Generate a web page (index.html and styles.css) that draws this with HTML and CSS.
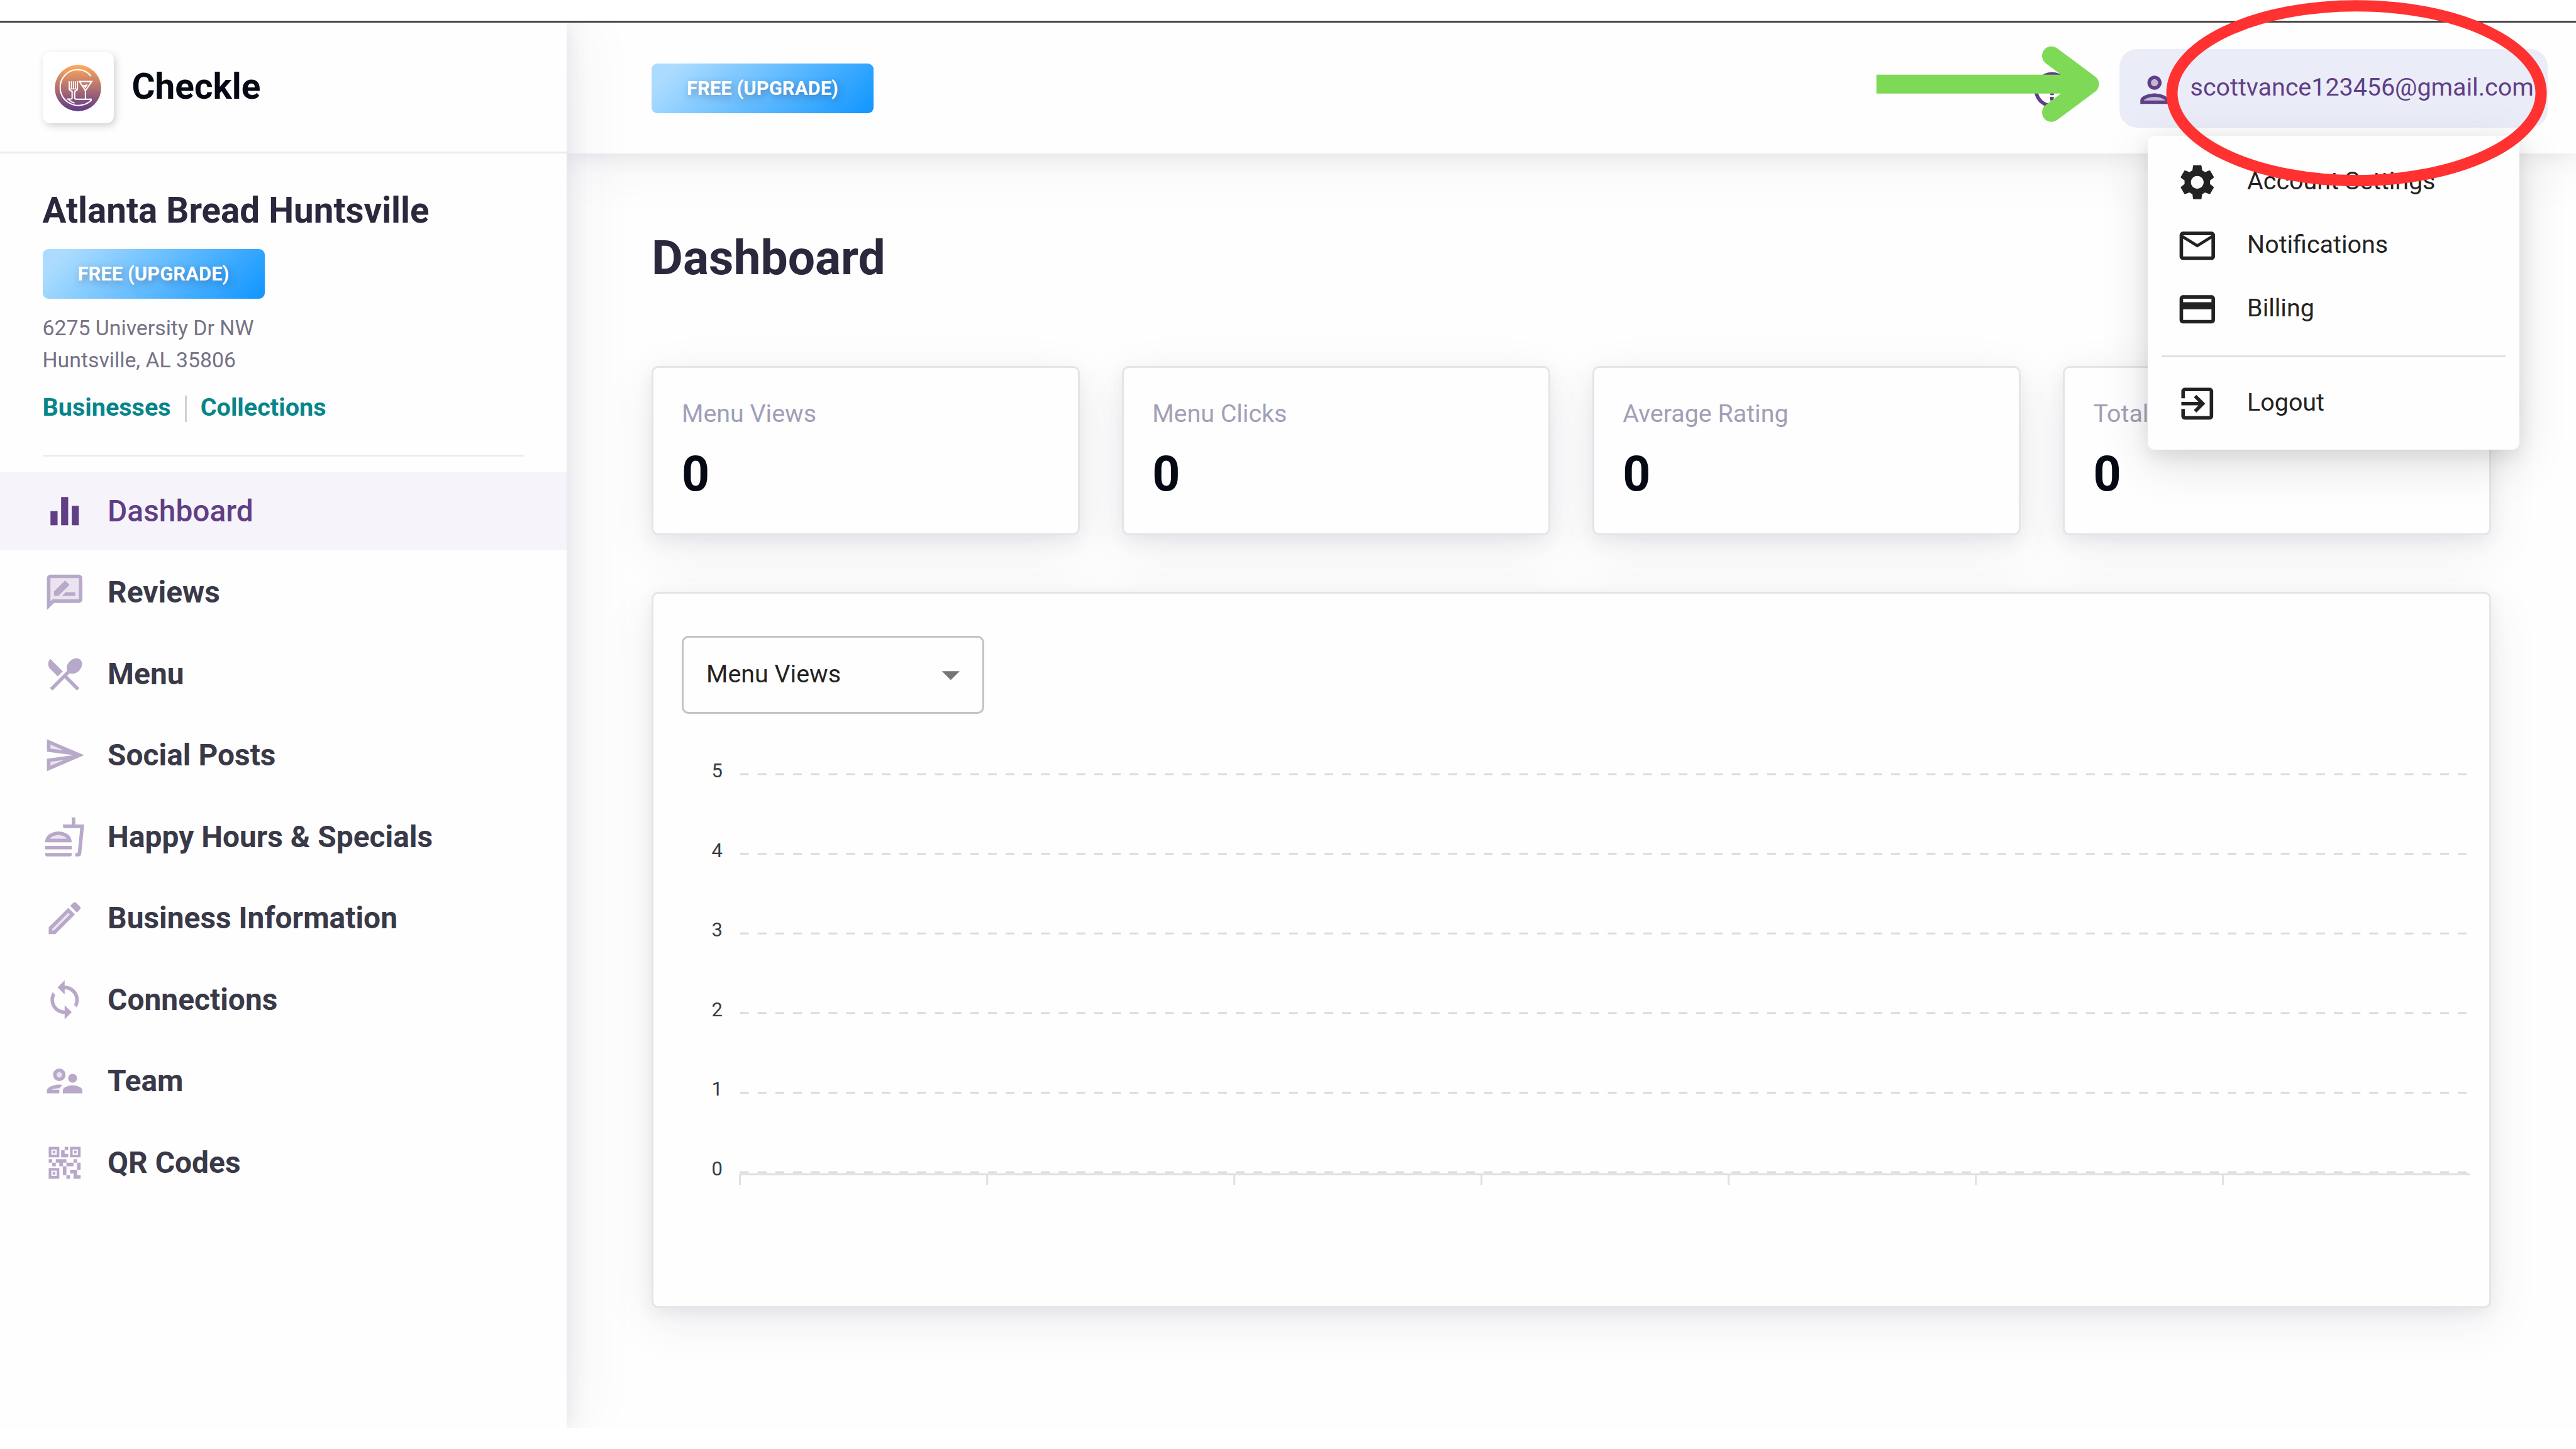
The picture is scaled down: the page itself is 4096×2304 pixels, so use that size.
FILE: index.html
```
<!DOCTYPE html>
<html lang="en">

<head>
    <meta charset="UTF-8">
    <meta name="viewport" content="width=device-width, initial-scale=1.0">
    <title>Checkle | Dashboard</title>
    <link rel="stylesheet" href="styles.css">
</head>

<body>
    <div class="app">
        <aside class="sidebar">
            <div class="brand">
                <div class="brand-logo">
                    <svg viewBox="112 153 324 325">
                        <defs>
                            <linearGradient id="logo-fill" x1="0" y1="0" x2="0" y2="1">
                                <stop offset="0.04" stop-color="#fba75c" />
                                <stop offset="0.5" stop-color="#b1706f" />
                                <stop offset="0.95" stop-color="#663f87" />
                            </linearGradient>
                        </defs>
                        <circle cx="274" cy="315.500" r="162" fill="url(#logo-fill)" />
                        <g fill="none" stroke="#fff" stroke-width="9">
                            <path d="M365 232A122 124 0 1 0 200 412Q236 437 278 437Q330 436 366 401V394H262Q251 394 251 384V340L270 326V268" />
                            <path d="M196 392H224Q233 392 233 384V340L213 326V268M205 392Q225 414 250 420" />
                            <path d="M228 268V320M242 268V320M256 268V320M213 322H270" stroke-width="7" />
                            <path d="M284 270H370L326 334ZM326 330V394" />
                            <path d="M314 299L334 295L326 310Z" fill="#fff" />
                        </g>
                    </svg>
                </div>
                <span class="brand-name">Checkle</span>
            </div>

            <div class="business">
                <h2>Atlanta Bread Huntsville</h2>
                <button class="upgrade">FREE (UPGRADE)</button>
                <p class="address">6275 University Dr NW<br>Huntsville, AL 35806</p>
                <div class="links">
                    <a>Businesses</a>
                    <span class="links-divider"></span>
                    <a>Collections</a>
                </div>
            </div>

            <nav class="nav">
                <a class="nav-item active">
                    <svg viewBox="0 0 24 24"><path d="M10 20h4V4h-4v16zm-6 0h4v-8H4v8zM16 9v11h4V9h-4z" /></svg>
                    <span>Dashboard</span>
                </a>
                <a class="nav-item">
                    <svg viewBox="0 0 24 24">
                        <path class="tone" d="M4 17.170L5.170 16H20V4H4z" />
                        <path d="M20 2H4c-1.100 0-1.990.9-1.990 2L2 22l4-4h14c1.100 0 2-.9 2-2V4c0-1.100-.9-2-2-2zm0 14H5.170L4 17.170V4h16v12z" />
                        <path d="M10.500 14H18v-2h-5.500zM14.360 8.130c.2-.2.2-.51 0-.71l-1.770-1.770c-.2-.2-.51-.2-.71 0L6 11.530V14h2.470l5.890-5.870z" />
                    </svg>
                    <span>Reviews</span>
                </a>
                <a class="nav-item">
                    <svg viewBox="0 0 24 24"><path d="M8.100 13.340l2.830-2.830L3.910 3.500c-1.560 1.560-1.560 4.090 0 5.660l4.190 4.180zm6.780-1.810c1.530.71 3.680.21 5.270-1.380 1.910-1.910 2.280-4.650.81-6.120-1.460-1.460-4.200-1.100-6.120.81-1.590 1.590-2.090 3.740-1.380 5.270L3.700 19.870l1.410 1.410L12 14.410l6.880 6.880 1.410-1.410L13.410 13l1.470-1.470z" /></svg>
                    <span>Menu</span>
                </a>
                <a class="nav-item">
                    <svg viewBox="0 0 24 24">
                        <path class="tone" d="M4 8.250l7.510 1L4 6.030zM4.010 17.970l7.500-3.220-7.510 1z" />
                        <path d="M2.010 3L2 10l15 2-15 2 .01 7L23 12 2.010 3zM4 8.250V6.030l7.510 3.220-7.510-1zm.01 9.720v-2.220l7.510-1-7.510 3.220z" />
                    </svg>
                    <span>Social Posts</span>
                </a>
                <a class="nav-item">
                    <svg viewBox="0 0 24 24">
                        <path class="tone" d="M8.500 10.990c-1.420 0-3.770.46-4.880 2.010h9.760c-1.110-1.550-3.470-2.010-4.880-2.010z" />
                        <path d="M1 21.980c0 .56.45 1.010 1.010 1.010H15c.56 0 1.010-.45 1.010-1.010V21H1v.98zM8.500 8.990C4.750 8.990 1 11 1 15h15c0-4-3.750-6.010-7.500-6.010zM3.620 13c1.110-1.550 3.470-2.010 4.880-2.010s3.770.46 4.880 2.010H3.620zM1 17h15v2H1zM18 5V1h-2v4h-5l.23 2h9.560l-1.400 14H18v2h1.720c.84 0 1.530-.65 1.630-1.470L23 5h-5z" />
                    </svg>
                    <span>Happy Hours &amp; Specials</span>
                </a>
                <a class="nav-item">
                    <svg viewBox="0 0 24 24">
                        <path class="tone" d="M5 18.080V19h.92l9.060-9.060-.92-.92z" />
                        <path d="M20.710 7.040c.39-.39.39-1.020 0-1.410l-2.340-2.340c-.2-.2-.45-.29-.71-.29s-.51.1-.7.29l-1.830 1.830 3.750 3.750 1.830-1.830zM3 17.250V21h3.750L17.810 9.940l-3.750-3.750L3 17.250zM5.920 19H5v-.92l9.060-9.060.92.92L5.920 19z" />
                    </svg>
                    <span>Business Information</span>
                </a>
                <a class="nav-item">
                    <svg viewBox="0 0 24 24"><path d="M12 4V1L8 5l4 4V6c3.310 0 6 2.690 6 6 0 1.010-.25 1.970-.7 2.800l1.460 1.460C19.540 15.030 20 13.570 20 12c0-4.420-3.580-8-8-8zm0 14c-3.310 0-6-2.690-6-6 0-1.010.25-1.970.7-2.800L5.240 7.740C4.460 8.970 4 10.430 4 12c0 4.420 3.580 8 8 8v3l4-4-4-4v3z" /></svg>
                    <span>Connections</span>
                </a>
                <a class="nav-item">
                    <svg viewBox="0 0 24 24">
                        <circle class="tone" cx="9" cy="8.500" r="1.500" />
                        <path class="tone" d="M4.770 17H9c0-.4.080-.6.300-.9-1.900.1-3.500.4-4.530.9z" />
                        <path fill-rule="evenodd" d="M9 12c1.930 0 3.500-1.570 3.500-3.500S10.930 5 9 5 5.500 6.570 5.500 8.500 7.070 12 9 12zm0-5c.83 0 1.500.67 1.500 1.500S9.830 10 9 10s-1.500-.67-1.500-1.500S8.170 7 9 7zM16.500 13c1.380 0 2.500-1.120 2.500-2.500S17.880 8 16.500 8 14 9.120 14 10.500s1.120 2.500 2.500 2.500zM16.500 14.500c-1.830 0-5.500.92-5.500 2.750V19h11v-1.750c0-1.830-3.670-2.750-5.500-2.750zM9 17H4.770c.7-.5 2.330-.9 4.530-.9.3-.8.900-1.400 1.500-1.900C10.200 14.060 9.600 14 9 14c-2.340 0-7 1.170-7 3.500V19h7v-2z" />
                    </svg>
                    <span>Team</span>
                </a>
                <a class="nav-item">
                    <svg viewBox="0 0 24 24"><path d="M15 21h-2v-2h2v2zm-2-7h-2v5h2v-5zm8-2h-2v4h2v-4zm-2-2h-2v2h2v-2zM7 12H5v2h2v-2zm-2-2H3v2h2v-2zm7-5h2V3h-2v2zm-7.500-.5v3h3v-3h-3zM9 9H3V3h6v6zm-4.500 7.500v3h3v-3h-3zM9 21H3v-6h6v6zm7.500-16.500v3h3v-3h-3zM21 9h-6V3h6v6zm-2 10v-3h-4v2h2v3h4v-2h-2zm-2-7h-4v2h4v-2zm-4-2H7v2h2v2h2v-2h2v-2zm1-1V7h-2V5h-2v4h4zM6.750 5.250h-1.500v1.500h1.500v-1.500zm0 12h-1.500v1.500h1.500v-1.500zm12-12h-1.500v1.500h1.500v-1.500z" /></svg>
                    <span>QR Codes</span>
                </a>
            </nav>
        </aside>

        <div class="main">
            <header class="header">
                <button class="upgrade">FREE (UPGRADE)</button>
                <div class="header-right">
                    <svg class="help" viewBox="0 0 24 24"><path d="M11 18h2v-2h-2v2zm1-16C6.480 2 2 6.480 2 12s4.480 10 10 10 10-4.480 10-10S17.520 2 12 2zm0 18c-4.410 0-8-3.590-8-8s3.590-8 8-8 8 3.590 8 8-3.590 8-8 8zm0-14c-2.210 0-4 1.790-4 4h2c0-1.100.9-2 2-2s2 .9 2 2c0 2-3 1.750-3 5h2c0-2.250 3-2.500 3-5 0-2.210-1.790-4-4-4z" /></svg>
                    <div class="user">
                        <svg viewBox="0 0 24 24">
                            <path class="tone" d="M12 16c-2.690 0-5.770 1.280-6 2h12c-.2-.71-3.300-2-6-2z" />
                            <circle class="tone" cx="12" cy="8" r="2" />
                            <path d="M12 14c-2.670 0-8 1.340-8 4v2h16v-2c0-2.660-5.330-4-8-4zm-6 4c.22-.72 3.310-2 6-2 2.700 0 5.800 1.290 6 2H6zM12 12c2.210 0 4-1.790 4-4s-1.790-4-4-4-4 1.790-4 4 1.790 4 4 4zm0-6c1.100 0 2 .9 2 2s-.9 2-2 2-2-.9-2-2 .9-2 2-2z" />
                        </svg>
                        <span>scottvance123456@gmail.com</span>
                    </div>
                </div>

                <!-- Account dropdown -->
                <div class="account-menu">
                    <a class="menu-item">
                        <svg viewBox="0 0 24 24"><path d="M19.140 12.940c.04-.3.060-.61.060-.94 0-.32-.02-.64-.07-.94l2.030-1.580c.18-.14.23-.41.12-.61l-1.920-3.320c-.12-.22-.37-.29-.59-.22l-2.390.96c-.5-.38-1.030-.7-1.620-.94l-.36-2.540c-.04-.24-.24-.41-.48-.41h-3.840c-.24 0-.43.17-.47.41l-.36 2.540c-.59.24-1.130.57-1.620.94l-2.390-.96c-.22-.08-.47 0-.59.22L2.740 8.870c-.12.21-.08.47.12.61l2.030 1.580c-.05.3-.09.63-.09.94s.02.64.07.94l-2.030 1.580c-.18.14-.23.41-.12.61l1.920 3.320c.12.22.37.29.59.22l2.390-.96c.5.38 1.030.7 1.620.94l.36 2.540c.05.24.24.41.48.41h3.840c.24 0 .44-.17.47-.41l.36-2.540c.59-.24 1.130-.56 1.620-.94l2.390.96c.22.08.47 0 .59-.22l1.920-3.320c.12-.22.07-.47-.12-.61l-2.010-1.580zM12 15.600c-1.980 0-3.600-1.620-3.600-3.600s1.620-3.600 3.600-3.600 3.600 1.620 3.600 3.600-1.620 3.600-3.600 3.600z" /></svg>
                        <span>Account Settings</span>
                    </a>
                    <a class="menu-item">
                        <svg viewBox="0 0 24 24"><path d="M20 4H4c-1.100 0-1.990.9-1.990 2L2 18c0 1.100.9 2 2 2h16c1.100 0 2-.9 2-2V6c0-1.100-.9-2-2-2zm0 14H4V8l8 5 8-5v10zm-8-7L4 6h16l-8 5z" /></svg>
                        <span>Notifications</span>
                    </a>
                    <a class="menu-item">
                        <svg viewBox="0 0 24 24"><path d="M20 4H4c-1.110 0-1.990.89-1.990 2L2 18c0 1.110.89 2 2 2h16c1.110 0 2-.89 2-2V6c0-1.110-.89-2-2-2zm0 14H4v-6h16v6zm0-10H4V6h16v2z" /></svg>
                        <span>Billing</span>
                    </a>
                    <hr>
                    <a class="menu-item">
                        <svg viewBox="0 0 24 24"><path d="M10.090 15.590L11.500 17l5-5-5-5-1.410 1.410L12.670 11H3v2h9.670l-2.580 2.590zM19 3H5c-1.110 0-2 .9-2 2v4h2V5h14v14H5v-4H3v4c0 1.100.89 2 2 2h14c1.100 0 2-.9 2-2V5c0-1.100-.9-2-2-2z" /></svg>
                        <span>Logout</span>
                    </a>
                </div>
            </header>

            <main class="content">
                <h1>Dashboard</h1>

                <div class="stats">
                    <div class="card stat">
                        <span class="stat-label">Menu Views</span>
                        <span class="stat-value">0</span>
                    </div>
                    <div class="card stat">
                        <span class="stat-label">Menu Clicks</span>
                        <span class="stat-value">0</span>
                    </div>
                    <div class="card stat">
                        <span class="stat-label">Average Rating</span>
                        <span class="stat-value">0</span>
                    </div>
                    <div class="card stat">
                        <span class="stat-label">Total</span>
                        <span class="stat-value">0</span>
                    </div>
                </div>

                <div class="card chart-card">
                    <div class="select">
                        <span>Menu Views</span>
                        <svg viewBox="0 0 24 24"><path d="M7 10l5 5 5-5z" /></svg>
                    </div>
                    <svg class="chart" viewBox="0 0 2920 800">
                        <g class="grid">
                            <path d="M137.600 96H2883M137.600 222.600H2883M137.600 349.200H2883M137.600 475.800H2883M137.600 602.400H2883M137.600 729H2883" />
                        </g>
                        <g class="axis">
                            <path d="M137.600 732H2888" />
                            <path d="M137.600 732v17M530.700 732v17M923.700 732v17M1316.700 732v17M1709.700 732v17M2102.700 732v17M2495.700 732v17" />
                        </g>
                        <g class="labels">
                            <text x="110" y="101">5</text>
                            <text x="110" y="227.600">4</text>
                            <text x="110" y="354.200">3</text>
                            <text x="110" y="480.800">2</text>
                            <text x="110" y="607.400">1</text>
                            <text x="110" y="734">0</text>
                        </g>
                    </svg>
                </div>
            </main>
        </div>
    </div>

    <!-- Arrow and circle drawn over the page -->
    <svg class="marks" viewBox="0 0 4096 2304">
        <path class="arrow-shaft" d="M2983.600 133.800H3300" />
        <path class="arrow-head" d="M3262 88.700L3322.500 133.800L3262 178.800" />
        <ellipse cx="3747" cy="148.200" rx="293.500" ry="139" />
    </svg>
</body>

</html>
```
FILE: styles.css
```
* {
    box-sizing: border-box;
}

body {
    margin: 0;
    width: 4096px;
    height: 2304px;
    overflow: hidden;
    position: relative;
    background: #fff;
    font-family: Roboto, "Liberation Sans", sans-serif;
    color: #222;
}

h1,
h2,
p {
    margin: 0;
}

svg {
    fill: currentColor;
    display: block;
    flex-shrink: 0;
}

.tone {
    opacity: 0.3;
}

.app {
    display: flex;
    margin-top: 33px;
    height: 2238px;
    border-top: 3px solid #4a4444;
    background: #fefefe;
    overflow: hidden;
}

/* Sidebar */
.sidebar {
    position: relative;
    z-index: 3;
    width: 901px;
    flex-shrink: 0;
    background: #fefefe;
    box-shadow: 0 0 34px rgba(70, 65, 100, 0.13), 0 0 110px rgba(70, 65, 100, 0.08);
}

.brand {
    display: flex;
    align-items: center;
    gap: 29px;
    height: 208px;
    padding-left: 67.500px;
    border-bottom: 3px solid #ececec;
}

.brand-logo {
    display: flex;
    align-items: center;
    justify-content: center;
    width: 113px;
    height: 113px;
    margin-top: 2px;
    background: #fff;
    border-radius: 12px;
    box-shadow: 3px 4px 12px rgba(40, 45, 70, 0.22);
}

.brand-logo svg {
    width: 74px;
    height: 74px;
}

.brand-name {
    font-size: 56.7px;
    font-weight: 700;
    line-height: 66px;
    color: #050914;
    margin-top: -1px;
}

.business {
    margin: 0 67px 25px 67.500px;
    padding: 58px 0 52px;
    border-bottom: 3px solid #ececec;
}

.business h2 {
    font-size: 56.5px;
    line-height: 66px;
    font-weight: 700;
    color: #2b273c;
    margin-bottom: 28px;
    white-space: nowrap;
}

.upgrade {
    display: block;
    width: 353px;
    height: 79px;
    padding: 0;
    border: none;
    border-radius: 9px;
    background: linear-gradient(135deg, #abdcff 10%, #0c94ff 102%);
    color: #fff;
    font-family: inherit;
    font-size: 31px;
    font-weight: 700;
    text-shadow: 3px 4px 12px rgba(40, 45, 70, 0.35);
}

.address {
    margin-top: 21px;
    font-size: 33.8px;
    line-height: 51px;
    color: #757285;
}

.links {
    display: flex;
    align-items: flex-end;
    margin-top: 26px;
    font-size: 39.6px;
    line-height: 47px;
    font-weight: 700;
    color: #06858a;
}

.links-divider {
    width: 3px;
    height: 42px;
    margin: 0 22px;
    background: #d0d0d0;
}

.nav {
    display: flex;
    flex-direction: column;
    gap: 6px;
}

.nav-item {
    display: flex;
    align-items: center;
    gap: 34.500px;
    height: 123.500px;
    padding-left: 69px;
    font-size: 47.9px;
    font-weight: 700;
    color: #393948;
}

.nav-item svg {
    width: 67.600px;
    height: 67.600px;
    color: #b8a8c9;
}

.nav-item.active {
    background: #f6f4fa;
    color: #613f86;
    font-weight: 500;
}

.nav-item.active svg {
    color: #613f86;
}

/* Header */
.main {
    flex: 1;
    min-width: 0;
}

.header {
    position: relative;
    z-index: 2;
    display: flex;
    align-items: center;
    justify-content: space-between;
    height: 208px;
    padding: 0 45px 0 135px;
    background: #fefefe;
    box-shadow: 0 0 34px rgba(70, 65, 100, 0.13), 0 0 110px rgba(70, 65, 100, 0.08);
}

.header-right {
    display: flex;
    align-items: center;
    color: #613f86;
}

.help {
    width: 67.600px;
    height: 67.600px;
    margin: 5px 73px 0 0;
}

.user {
    display: flex;
    align-items: center;
    gap: 23px;
    width: 681px;
    height: 125px;
    padding-left: 22px;
    border-radius: 28px;
    background: #eaedf7;
    font-size: 39.4px;
    white-space: nowrap;
}

.user svg {
    width: 67.600px;
    height: 67.600px;
    margin-top: 6px;
}

.user span {
    margin-top: -4px;
}

.account-menu {
    position: absolute;
    top: 180px;
    right: 90px;
    width: 591px;
    height: 499px;
    padding: 23px 0 22px;
    background: #fefefe;
    border-radius: 11px;
    box-shadow: 0 10px 30px rgba(0, 0, 0, 0.09), 0 20px 80px rgba(0, 0, 0, 0.12);
}

.menu-item {
    display: flex;
    align-items: center;
    gap: 46px;
    height: 101.300px;
    padding-left: 44.500px;
    font-size: 39.4px;
}

.menu-item svg {
    width: 67.600px;
    height: 67.600px;
}

.menu-item span {
    margin-top: -5px;
}

.account-menu hr {
    height: 3px;
    margin: 22px 22px 23px;
    border: none;
    background: #e0e0e0;
}

/* Content */
.content {
    padding: 121px 135px 0 135px;
}

.content h1 {
    font-size: 76.8px;
    line-height: 90px;
    font-weight: 700;
    color: #2b273c;
    margin-bottom: 127px;
}

.card {
    background: #fefefe;
    border: 3px solid #e5e5e6;
    border-radius: 11px;
    box-shadow: 0 8px 24px rgba(70, 65, 100, 0.08), 0 22px 80px rgba(70, 65, 100, 0.09);
}

.stats {
    display: grid;
    grid-template-columns: repeat(4, 1fr);
    gap: 67.600px;
    margin-bottom: 90px;
}

.stat {
    display: flex;
    flex-direction: column;
    height: 269px;
    padding: 50px 45px;
}

.stat-label {
    font-size: 39.4px;
    line-height: 46px;
    color: #a19fb7;
    margin-bottom: 28px;
}

.stat-value {
    font-size: 77px;
    line-height: 90px;
    font-weight: 700;
    color: #050914;
}

.chart-card {
    height: 1139px;
    padding-top: 67px;
}

.select {
    display: flex;
    align-items: center;
    justify-content: space-between;
    width: 481px;
    height: 124px;
    margin-left: 45px;
    padding: 0 16px 0 36px;
    border: 3px solid #c4c4c4;
    border-radius: 11px;
    font-size: 39.4px;
}

.select span {
    margin-top: -4px;
}

.select svg {
    width: 67.600px;
    height: 67.600px;
    color: #757575;
}

.chart {
    width: 2920px;
    height: 800px;
}

.grid {
    stroke: #d8dde3;
    stroke-width: 3;
    stroke-dasharray: 14.08;
}

.axis {
    stroke: #e0e0e0;
    stroke-width: 3;
}

.labels {
    fill: #373d3f;
    font-size: 31px;
    text-anchor: end;
}

/* Marks over the page */
.marks {
    position: absolute;
    top: 0;
    left: 0;
    width: 4096px;
    height: 2304px;
    z-index: 10;
    fill: none;
}

.arrow-shaft,
.arrow-head {
    stroke: #7ed957;
    stroke-width: 30;
    stroke-linecap: butt;
}

.arrow-head {
    stroke-linecap: round;
    stroke-linejoin: round;
}

.marks ellipse {
    stroke: #ff3131;
    stroke-width: 18;
}
```
